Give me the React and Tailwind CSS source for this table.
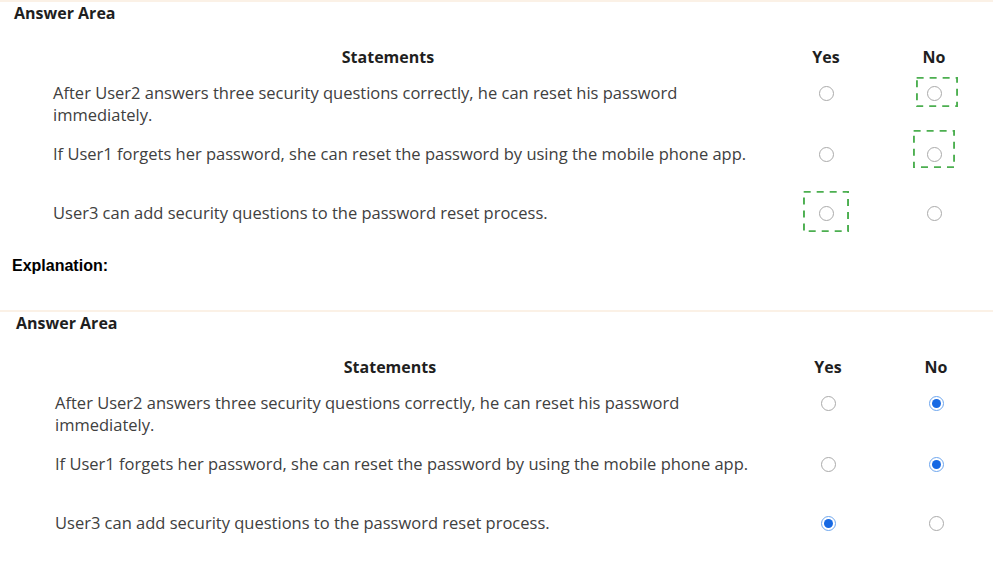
const rows = [
  { lines: ['After User2 answers three security questions correctly, he can reset his password', 'immediately.'], cls: 'mt-[14px]' },
  { lines: ['If User1 forgets her password, she can reset the password by using the mobile phone app.'], cls: 'mt-[17px]' },
  { lines: ['User3 can add security questions to the password reset process.'], cls: 'mt-[37px]' },
]

// dashed green boxes around the correct answers (top block only)
const questionMarks = [
  { no: 'left-[-11px] top-[-9px] w-[42px] h-[30px]' },
  { no: 'left-[-14px] top-[-17px] w-[42px] h-[38px]' },
  { yes: 'left-[-16px] top-[-15px] w-[46px] h-[41px]' },
]

const answers = [
  { no: true },
  { no: true },
  { yes: true },
]

function DashedBox({ cls }) {
  return (
    <svg className={`absolute ${cls}`} preserveAspectRatio="none" viewBox="0 0 100 100">
      <rect x="1.5" y="1.5" width="97" height="97" fill="none" stroke="#4caf50" strokeWidth="2.5"
        strokeDasharray="7 6" vectorEffect="non-scaling-stroke" />
    </svg>
  )
}

function Radio({ checked, mark }) {
  return (
    <div className="relative w-[14px] h-[14px]">
      {checked ? (
        <span className="flex items-center justify-center w-[15px] h-[15px] -m-[0.5px] rounded-full border border-[#6ea6ee]">
          <span className="w-[9px] h-[9px] rounded-full bg-[#1769e3]" />
        </span>
      ) : (
        <span className="block w-[15px] h-[15px] -m-[0.5px] rounded-full border-[1.5px] border-[#aaaaaa] bg-white" />
      )}
      {mark && <DashedBox cls={mark} />}
    </div>
  )
}

function AnswerArea({ picked, marks, shift }) {
  return (
    <div className={`border-t-2 border-[#fbf1e6] bg-white pb-[21px] ${shift}`} style={{ fontFamily: '"Open Sans", "Noto Sans", sans-serif' }}>
      <div className="pl-[14px] text-[16px] leading-[22px] font-bold text-[#1f1f1f]">Answer Area</div>
      <div className="flex mt-[22px] pl-[53px] text-[16px] leading-[22px] font-bold text-[#1f1f1f]">
        <div className="w-[670px] text-center">Statements</div>
        <div className="w-[49px]" />
        <div className="w-[108px] text-center">Yes</div>
        <div className="w-[108px] text-center">No</div>
      </div>
      {rows.map((r, i) => (
        <div key={i} className={`flex items-start pl-[53px] ${r.cls}`}>
          <div className="w-[719px] text-[16.5px] leading-[22px] text-[#404040] whitespace-nowrap">
            {r.lines.map((l, j) => <div key={j}>{l}</div>)}
          </div>
          <div className="w-[108px] h-[22px] flex items-center justify-center">
            <Radio checked={picked && picked[i].yes} mark={marks && marks[i].yes} />
          </div>
          <div className="w-[108px] h-[22px] flex items-center justify-center">
            <Radio checked={picked && picked[i].no} mark={marks && marks[i].no} />
          </div>
        </div>
      ))}
    </div>
  )
}

export default function App() {
  return (
    <div className="w-[993px] h-[563px] overflow-hidden bg-white">
      <AnswerArea marks={questionMarks} shift="" />
      <div className="pt-[13px] pl-[12px] text-[16px] leading-[16px] font-bold text-black" style={{ fontFamily: '"Liberation Sans", Arial, sans-serif' }}>
        Explanation:
      </div>
      <div className="mt-[36px]">
        <AnswerArea picked={answers} shift="pl-[2px]" />
      </div>
    </div>
  )
}
